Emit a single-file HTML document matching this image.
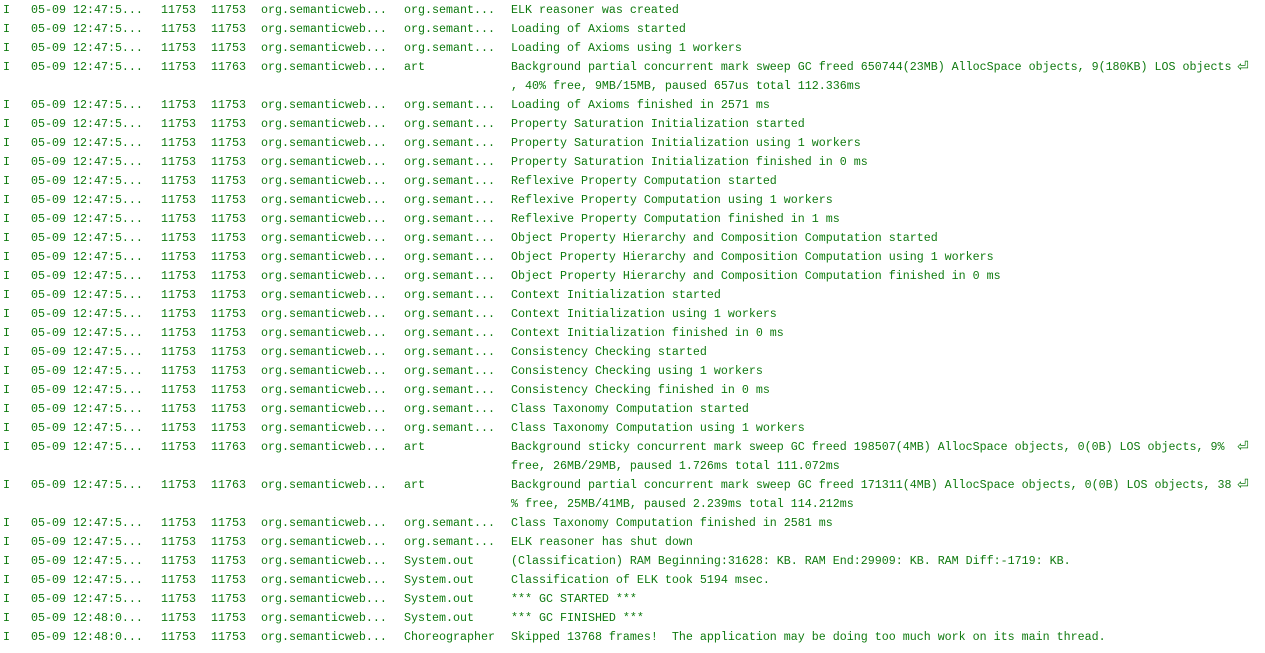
<!DOCTYPE html>
<html><head><meta charset="utf-8"><style>
body{margin:0;background:#fff;width:1265px;height:653px;overflow:hidden;font-family:"Liberation Mono","Courier New",monospace;font-size:11.67px;color:#0f7a0f;}
.r{position:relative;height:19px;line-height:19px;white-space:pre;}
.r.w{height:38px;}
.r span{position:absolute;top:0;}
.a{left:3px}.b{left:31px}.c{left:161px}.d{left:211px}.e{left:261px}.f{left:404px}.g{left:511px}.g2{left:511px;top:19px!important}
.ar{left:1237px;font-size:14px;font-family:"DejaVu Sans",sans-serif}
</style></head><body>
<div style="height:1px"></div>
<div id="L"></div>
<script>
var rows=[
["11753","org.semant...","ELK reasoner was created"],
["11753","org.semant...","Loading of Axioms started"],
["11753","org.semant...","Loading of Axioms using 1 workers"],
["11763","art","Background partial concurrent mark sweep GC freed 650744(23MB) AllocSpace objects, 9(180KB) LOS objects",", 40% free, 9MB/15MB, paused 657us total 112.336ms"],
["11753","org.semant...","Loading of Axioms finished in 2571 ms"],
["11753","org.semant...","Property Saturation Initialization started"],
["11753","org.semant...","Property Saturation Initialization using 1 workers"],
["11753","org.semant...","Property Saturation Initialization finished in 0 ms"],
["11753","org.semant...","Reflexive Property Computation started"],
["11753","org.semant...","Reflexive Property Computation using 1 workers"],
["11753","org.semant...","Reflexive Property Computation finished in 1 ms"],
["11753","org.semant...","Object Property Hierarchy and Composition Computation started"],
["11753","org.semant...","Object Property Hierarchy and Composition Computation using 1 workers"],
["11753","org.semant...","Object Property Hierarchy and Composition Computation finished in 0 ms"],
["11753","org.semant...","Context Initialization started"],
["11753","org.semant...","Context Initialization using 1 workers"],
["11753","org.semant...","Context Initialization finished in 0 ms"],
["11753","org.semant...","Consistency Checking started"],
["11753","org.semant...","Consistency Checking using 1 workers"],
["11753","org.semant...","Consistency Checking finished in 0 ms"],
["11753","org.semant...","Class Taxonomy Computation started"],
["11753","org.semant...","Class Taxonomy Computation using 1 workers"],
["11763","art","Background sticky concurrent mark sweep GC freed 198507(4MB) AllocSpace objects, 0(0B) LOS objects, 9%","free, 26MB/29MB, paused 1.726ms total 111.072ms"],
["11763","art","Background partial concurrent mark sweep GC freed 171311(4MB) AllocSpace objects, 0(0B) LOS objects, 38","% free, 25MB/41MB, paused 2.239ms total 114.212ms"],
["11753","org.semant...","Class Taxonomy Computation finished in 2581 ms"],
["11753","org.semant...","ELK reasoner has shut down"],
["11753","System.out","(Classification) RAM Beginning:31628: KB. RAM End:29909: KB. RAM Diff:-1719: KB."],
["11753","System.out","Classification of ELK took 5194 msec."],
["11753","System.out","*** GC STARTED ***"],
["11753","System.out","*** GC FINISHED ***"],
["11753","Choreographer","Skipped 13768 frames!  The application may be doing too much work on its main thread."]
];
var h="";
rows.forEach(function(r,i){
var dt=(i>=29)?"05-09 12:48:0...":"05-09 12:47:5...";
h+='<div class="r'+(r[3]?' w':'')+'"><span class="a">I</span><span class="b">'+dt+'</span><span class="c">11753</span><span class="d">'+r[0]+'</span><span class="e">org.semanticweb...</span><span class="f">'+r[1]+'</span><span class="g">'+r[2]+'</span>'+(r[3]?'<span class="ar">&#x23CE;</span><span class="g2" style="position:absolute;left:511px">'+r[3]+'</span>':'')+'</div>';
});
document.getElementById("L").innerHTML=h;
</script>
</body></html>
